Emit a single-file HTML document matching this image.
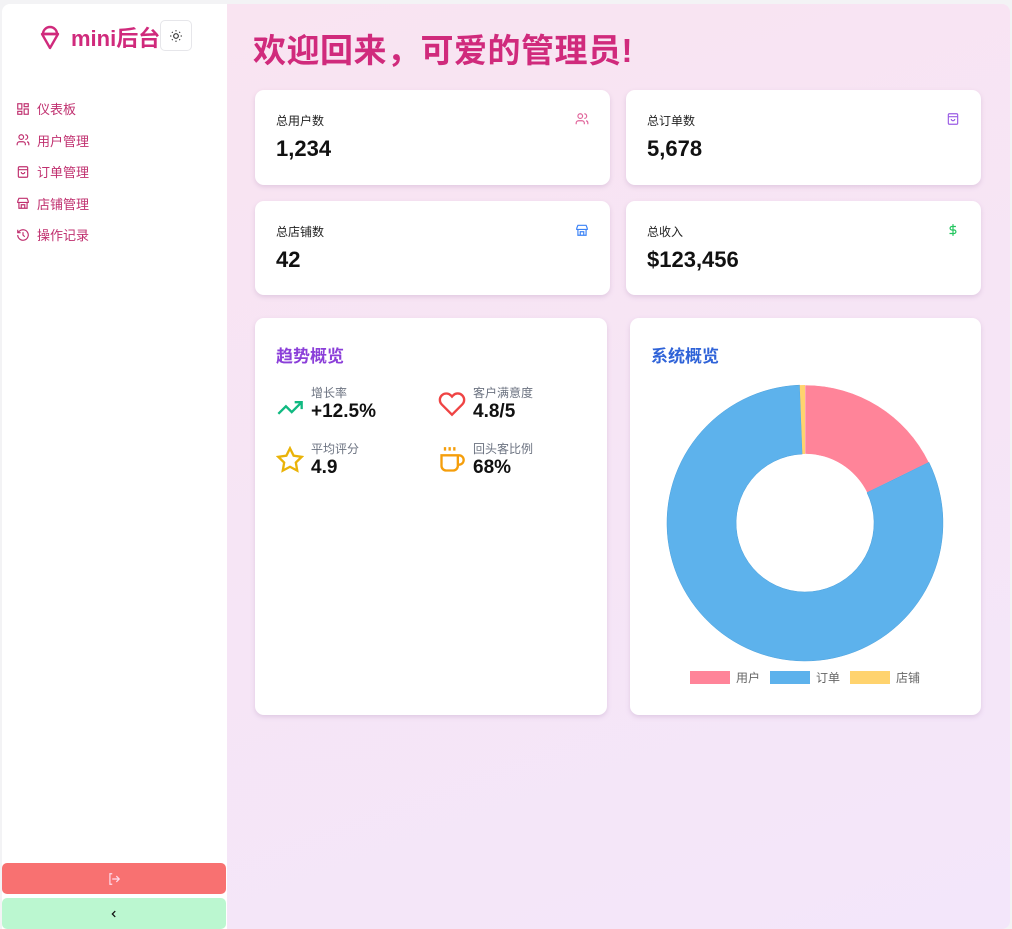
<!DOCTYPE html>
<html><head><meta charset="utf-8"><style>
*{box-sizing:border-box;margin:0;padding:0}
body{width:1012px;height:929px;background:#f3f3f5;font-family:"Liberation Sans","Noto Sans CJK SC",sans-serif;position:relative;overflow:hidden}
.side{position:absolute;left:2px;top:4px;width:225px;height:925px;background:#fff;border-radius:8px 0 0 0}
.main{position:absolute;left:227px;top:4px;width:783px;height:925px;border-radius:0 8px 8px 0;background:linear-gradient(160deg,#f9e4f1,#f3e6fa)}
.logo{position:absolute;display:flex;align-items:center;color:#d02a7c;font-weight:bold;font-size:21px}
.theme{position:absolute;width:32px;height:31px;border:1px solid #e6e6ea;border-radius:5px;background:#fff;display:flex;align-items:center;justify-content:center}
.nav{position:absolute}
.nav div{display:flex;align-items:center;height:31.5px;color:#c0306f;font-size:13px}
.nav svg{margin-right:7px}
.btn{position:absolute;left:2px;width:224px;height:31px;border-radius:5px;display:flex;align-items:center;justify-content:center}
h1{position:absolute;left:253px;top:24px;font-size:33px;color:#d02a7c;font-weight:bold;letter-spacing:0.5px}
.card{position:absolute;background:#fff;border-radius:9px;box-shadow:0 2px 5px rgba(160,120,170,.25)}
.card .l{position:absolute;left:21px;top:22px;font-size:12px;color:#222}
.card .v{position:absolute;left:21px;top:46px;font-size:22px;font-weight:bold;color:#111}
.card svg.ic{position:absolute;right:21px;top:22px}
.pt{position:absolute;left:21px;top:24px;font-size:17px;font-weight:bold}
.it{position:absolute;display:flex}
.it .s{font-size:12px;color:#6b7280;line-height:14px}
.it .n{font-size:19px;font-weight:bold;color:#111;line-height:24px}
</style></head><body>
<div class="side">
<div class="logo" style="left:36px;top:17px"><svg width="24" height="28" viewBox="0 0 24 28" fill="none" stroke="#d02a7c" stroke-width="2.4" stroke-linejoin="round"><path d="M5 11a7 7 0 0 1 14 0z"/><path d="M4 11h16l-8 14z"/></svg><span style="margin-left:9px;font-size:22px">mini后台</span></div>
<div class="theme" style="left:158px;top:16px"><svg width="14" height="14" viewBox="0 0 24 24" fill="none" stroke="#333" stroke-width="2"><circle cx="12" cy="12" r="4"/><path d="M12 2v2M12 20v2M2 12h2M20 12h2M5 5l1.4 1.4M17.6 17.6L19 19M5 19l1.4-1.4M17.6 6.4L19 5"/></svg></div>
<div class="nav" style="left:14px;top:89px">
<div><svg width="14" height="14" viewBox="0 0 24 24" fill="none" stroke="#c0306f" stroke-width="2"><rect x="3" y="3" width="7" height="9"/><rect x="14" y="3" width="7" height="5"/><rect x="14" y="12" width="7" height="9"/><rect x="3" y="16" width="7" height="5"/></svg>仪表板</div>
<div><svg width="14" height="14" viewBox="0 0 24 24" fill="none" stroke="#c0306f" stroke-width="2"><circle cx="9" cy="7" r="4"/><path d="M2 21v-2a4 4 0 0 1 4-4h6a4 4 0 0 1 4 4v2M16 3a4 4 0 0 1 0 8M22 21v-2a4 4 0 0 0-3-4"/></svg>用户管理</div>
<div><svg width="14" height="14" viewBox="0 0 24 24" fill="none" stroke="#c0306f" stroke-width="2"><rect x="4" y="3" width="16" height="18" rx="2"/><path d="M4 8h16M9 12a3 3 0 0 0 6 0"/></svg>订单管理</div>
<div><svg width="14" height="14" viewBox="0 0 24 24" fill="none" stroke="#c0306f" stroke-width="2"><path d="M3 9l2-5h14l2 5v2H3zM5 11v10h14V11M9 21v-6h6v6"/></svg>店铺管理</div>
<div><svg width="14" height="14" viewBox="0 0 24 24" fill="none" stroke="#c0306f" stroke-width="2"><path d="M3 12a9 9 0 1 0 3-6.7L3 8M3 3v5h5M12 7v5l3 3"/></svg>操作记录</div>
</div>
</div>
<div class="btn" style="top:863px;background:#f87171"><svg width="14" height="14" viewBox="0 0 24 24" fill="none" stroke="#fde" stroke-width="2"><path d="M9 21H5V3h4M16 17l5-5-5-5M21 12H9"/></svg></div>
<div class="btn" style="top:898px;background:#bbf7d0"><svg width="10" height="10" viewBox="0 0 24 24" fill="none" stroke="#111" stroke-width="3"><path d="M15 5l-7 7 7 7"/></svg></div>
<div class="main"></div>
<h1>欢迎回来，可爱的管理员!</h1>
<div class="card" style="left:255px;top:90px;width:355px;height:95px"><div class="l">总用户数</div><div class="v">1,234</div><svg class="ic" width="14" height="14" viewBox="0 0 24 24" fill="none" stroke="#e0649a" stroke-width="2"><circle cx="9" cy="7" r="4"/><path d="M2 21v-2a4 4 0 0 1 4-4h6a4 4 0 0 1 4 4v2M16 3a4 4 0 0 1 0 8M22 21v-2a4 4 0 0 0-3-4"/></svg></div>
<div class="card" style="left:626px;top:90px;width:355px;height:95px"><div class="l">总订单数</div><div class="v">5,678</div><svg class="ic" width="14" height="14" viewBox="0 0 24 24" fill="none" stroke="#9b5de5" stroke-width="2"><rect x="4" y="3" width="16" height="18" rx="2"/><path d="M4 8h16M9 12a3 3 0 0 0 6 0"/></svg></div>
<div class="card" style="left:255px;top:201px;width:355px;height:94px"><div class="l">总店铺数</div><div class="v">42</div><svg class="ic" width="14" height="14" viewBox="0 0 24 24" fill="none" stroke="#3b82f6" stroke-width="2"><path d="M3 9l2-5h14l2 5v2H3zM5 11v10h14V11M9 21v-6h6v6"/></svg></div>
<div class="card" style="left:626px;top:201px;width:355px;height:94px"><div class="l">总收入</div><div class="v">$123,456</div><svg class="ic" width="14" height="14" viewBox="0 0 24 24" fill="none" stroke="#22c55e" stroke-width="2"><path d="M12 2v20M17 6H10a3 3 0 0 0 0 6h4a3 3 0 0 1 0 6H6"/></svg></div>
<div class="card" style="left:255px;top:318px;width:352px;height:397px"><div class="pt" style="color:#8b3fd9">趋势概览</div>
<div class="it" style="left:21px;top:68px"><svg width="28" height="28" viewBox="0 0 24 24" fill="none" stroke="#10b981" stroke-width="2" style="margin:8px 7px 0 0"><path d="M22 7l-8.5 8.5-5-5L2 17M16 7h6v6"/></svg><div><div class="s">增长率</div><div class="n">+12.5%</div></div></div>
<div class="it" style="left:183px;top:68px"><svg width="28" height="28" viewBox="0 0 24 24" fill="none" stroke="#ef4444" stroke-width="2" style="margin:4px 7px 0 0"><path d="M20.8 4.6a5.5 5.5 0 0 0-7.8 0L12 5.7l-1-1.1a5.5 5.5 0 0 0-7.8 7.8L12 21.2l8.8-8.8a5.5 5.5 0 0 0 0-7.8z"/></svg><div><div class="s">客户满意度</div><div class="n">4.8/5</div></div></div>
<div class="it" style="left:21px;top:124px"><svg width="28" height="28" viewBox="0 0 24 24" fill="none" stroke="#eab308" stroke-width="2" style="margin:4px 7px 0 0"><path d="M12 2l3.1 6.3 6.9 1-5 4.9 1.2 6.9L12 17.8l-6.2 3.3L7 14.2 2 9.3l6.9-1z"/></svg><div><div class="s">平均评分</div><div class="n">4.9</div></div></div>
<div class="it" style="left:183px;top:124px"><svg width="28" height="28" viewBox="0 0 24 24" fill="none" stroke="#f59e0b" stroke-width="2" style="margin:4px 7px 0 0"><path d="M17 8h1a4 4 0 0 1 0 8h-1M3 8h14v9a4 4 0 0 1-4 4H7a4 4 0 0 1-4-4zM6 1v3M10 1v3M14 1v3"/></svg><div><div class="s">回头客比例</div><div class="n">68%</div></div></div>
</div>
<div class="card" style="left:630px;top:318px;width:351px;height:397px"><div class="pt" style="color:#2f63d8">系统概览</div></div>
<svg style="position:absolute;left:0;top:0" width="1012" height="929">
<path d="M805 385A138 138 0 0 1 928.9 462.3L867 492.6A69 69 0 0 0 805 454Z" fill="#ff8499" stroke="#fff" stroke-width=".5"/>
<path d="M928.9 462.3A138 138 0 1 1 799.7 385.1L802.35 454.05A69 69 0 1 0 867 492.6Z" fill="#5db2ec" stroke="#4aa0dc" stroke-width=".5"/>
<path d="M799.7 385.1A138 138 0 0 1 805 385L805 454A69 69 0 0 0 802.35 454.05Z" fill="#ffd36e"/>
<rect x="690" y="671" width="40" height="13" fill="#ff8499"/><rect x="770" y="671" width="40" height="13" fill="#5db2ec"/><rect x="850" y="671" width="40" height="13" fill="#ffd36e"/>
<g font-size="12" fill="#666" font-family="Liberation Sans,Noto Sans CJK SC,sans-serif"><text x="736" y="682">用户</text><text x="816" y="682">订单</text><text x="896" y="682">店铺</text></g>
</svg>
</body></html>
